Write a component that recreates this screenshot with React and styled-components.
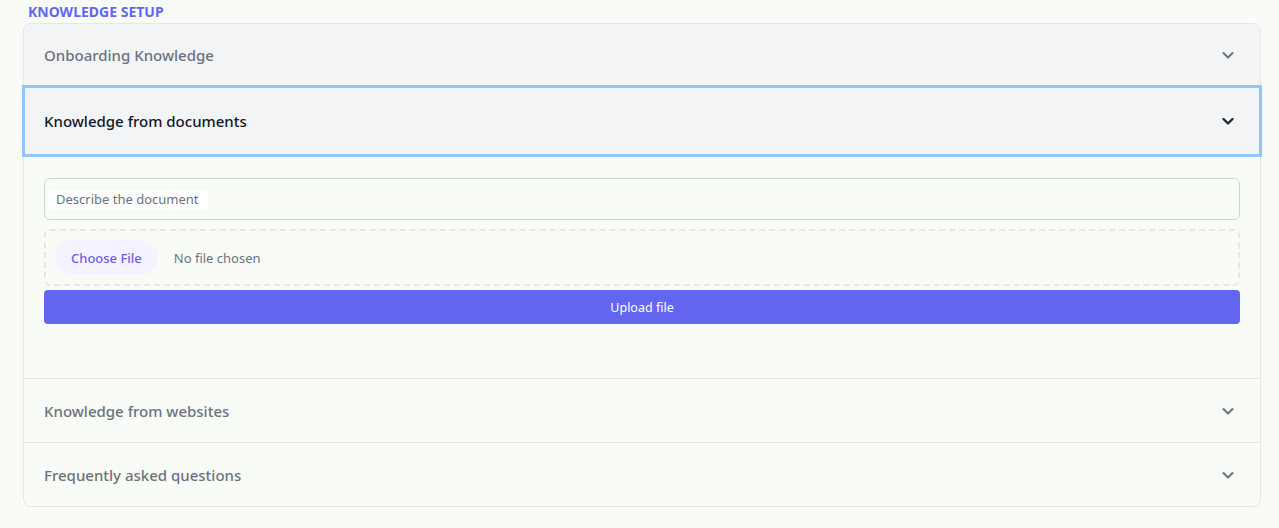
import React, { useState } from "react";
import styled, { createGlobalStyle } from "styled-components";

const GlobalStyle = createGlobalStyle`
  html, body {
    margin: 0;
    padding: 0;
    background: #f9fbf6;
    font-family: "Noto Sans", "Open Sans", sans-serif;
  }
  * { box-sizing: border-box; }
`;

const Page = styled.div`
  padding: 4px 18px 20px 23px;
  min-height: 528px;
`;

const SectionTitle = styled.h2`
  margin: 0 0 3px 5px;
  font-size: 14px;
  line-height: 16px;
  font-weight: 700;
  color: #6366f1;
  text-transform: uppercase;
`;

const Accordion = styled.div`
  border: 1px solid #e5e7eb;
  border-radius: 8px;
`;

const Item = styled.div`
  & + & {
    border-top: 1px solid #e5e7eb;
  }
  &:first-child > button {
    border-radius: 7px 7px 0 0;
  }
`;

const Header = styled.button`
  display: flex;
  align-items: center;
  justify-content: space-between;
  width: 100%;
  height: ${(p) => (p.$open ? "68px" : p.$shaded ? "62px" : "63px")};
  padding: 0 20px;
  border: none;
  outline: ${(p) => (p.$open ? "3px solid #93c5fd" : "none")};
  outline-offset: -1px;
  background: ${(p) => (p.$open || p.$shaded ? "#f3f4f6" : "transparent")};
  font-family: inherit;
  font-size: 15px;
  font-weight: 500;
  color: ${(p) => (p.$open ? "#111827" : "#6b7280")};
  text-align: left;
  cursor: pointer;
`;

const Chevron = styled.svg`
  width: 16px;
  height: 16px;
  margin-right: 4px;
  color: ${(p) => (p.$open ? "#1f2937" : "#6b7280")};
`;

const Body = styled.div`
  display: flex;
  flex-direction: column;
  padding: 23px 20px 54px 20px;
`;

const InputBox = styled.label`
  display: flex;
  align-items: center;
  height: 42px;
  margin-bottom: 9px;
  padding: 0 3px;
  border: 1px solid #cbd5e1;
  border-radius: 6px;
  cursor: text;
`;

const TextInput = styled.input`
  field-sizing: content;
  min-width: 160px;
  max-width: 100%;
  height: 19px;
  padding: 0 8px;
  border: none;
  background: #ffffff;
  font-family: inherit;
  font-size: 13px;
  color: #374151;
  outline: none;

  &::placeholder {
    color: #6b7280;
  }
`;

const Dropzone = styled.label`
  display: flex;
  align-items: center;
  gap: 16px;
  height: 57px;
  margin-bottom: 4px;
  padding: 0 9px;
  border: 2px dashed #e5e7eb;
  border-radius: 6px;
  font-size: 13px;
  color: #6b7280;
  cursor: pointer;

  input { display: none; }
`;

const ChooseButton = styled.span`
  display: inline-flex;
  align-items: center;
  height: 35px;
  padding: 0 16px;
  border-radius: 18px;
  background: #f5f3ff;
  color: #6d5ce7;
  font-size: 13px;
  font-weight: 500;
`;

const UploadButton = styled.button`
  height: 34px;
  border: none;
  border-radius: 4px;
  background: #6366f1;
  color: #ffffff;
  font-family: inherit;
  font-size: 12.5px;
  cursor: pointer;
`;

const ChevronIcon = ({ open }) => (
  <Chevron $open={open} viewBox="0 0 16 16" fill="none">
    <path
      d="M3.5 6 L8 10.5 L12.5 6"
      stroke="currentColor"
      strokeWidth={open ? 2.4 : 2.1}
      strokeLinecap="round"
      strokeLinejoin="round"
    />
  </Chevron>
);

const sections = [
  { id: "onboarding", title: "Onboarding Knowledge", shaded: true },
  { id: "documents", title: "Knowledge from documents" },
  { id: "websites", title: "Knowledge from websites" },
  { id: "faq", title: "Frequently asked questions" },
];

export default function App() {
  const [open, setOpen] = useState("documents");

  return (
    <>
      <GlobalStyle />
      <Page>
        <SectionTitle>Knowledge Setup</SectionTitle>
        <Accordion>
          {sections.map((s) => {
            const isOpen = open === s.id;
            return (
              <Item key={s.id}>
                <Header
                  $open={isOpen}
                  $shaded={s.shaded}
                  onClick={() => setOpen(isOpen ? null : s.id)}
                >
                  {s.title}
                  <ChevronIcon open={isOpen} />
                </Header>
                {isOpen && s.id === "documents" && (
                  <Body>
                    <InputBox>
                      <TextInput placeholder="Describe the document" />
                    </InputBox>
                    <Dropzone>
                      <input type="file" />
                      <ChooseButton>Choose File</ChooseButton>
                      No file chosen
                    </Dropzone>
                    <UploadButton>Upload file</UploadButton>
                  </Body>
                )}
              </Item>
            );
          })}
        </Accordion>
      </Page>
    </>
  );
}
